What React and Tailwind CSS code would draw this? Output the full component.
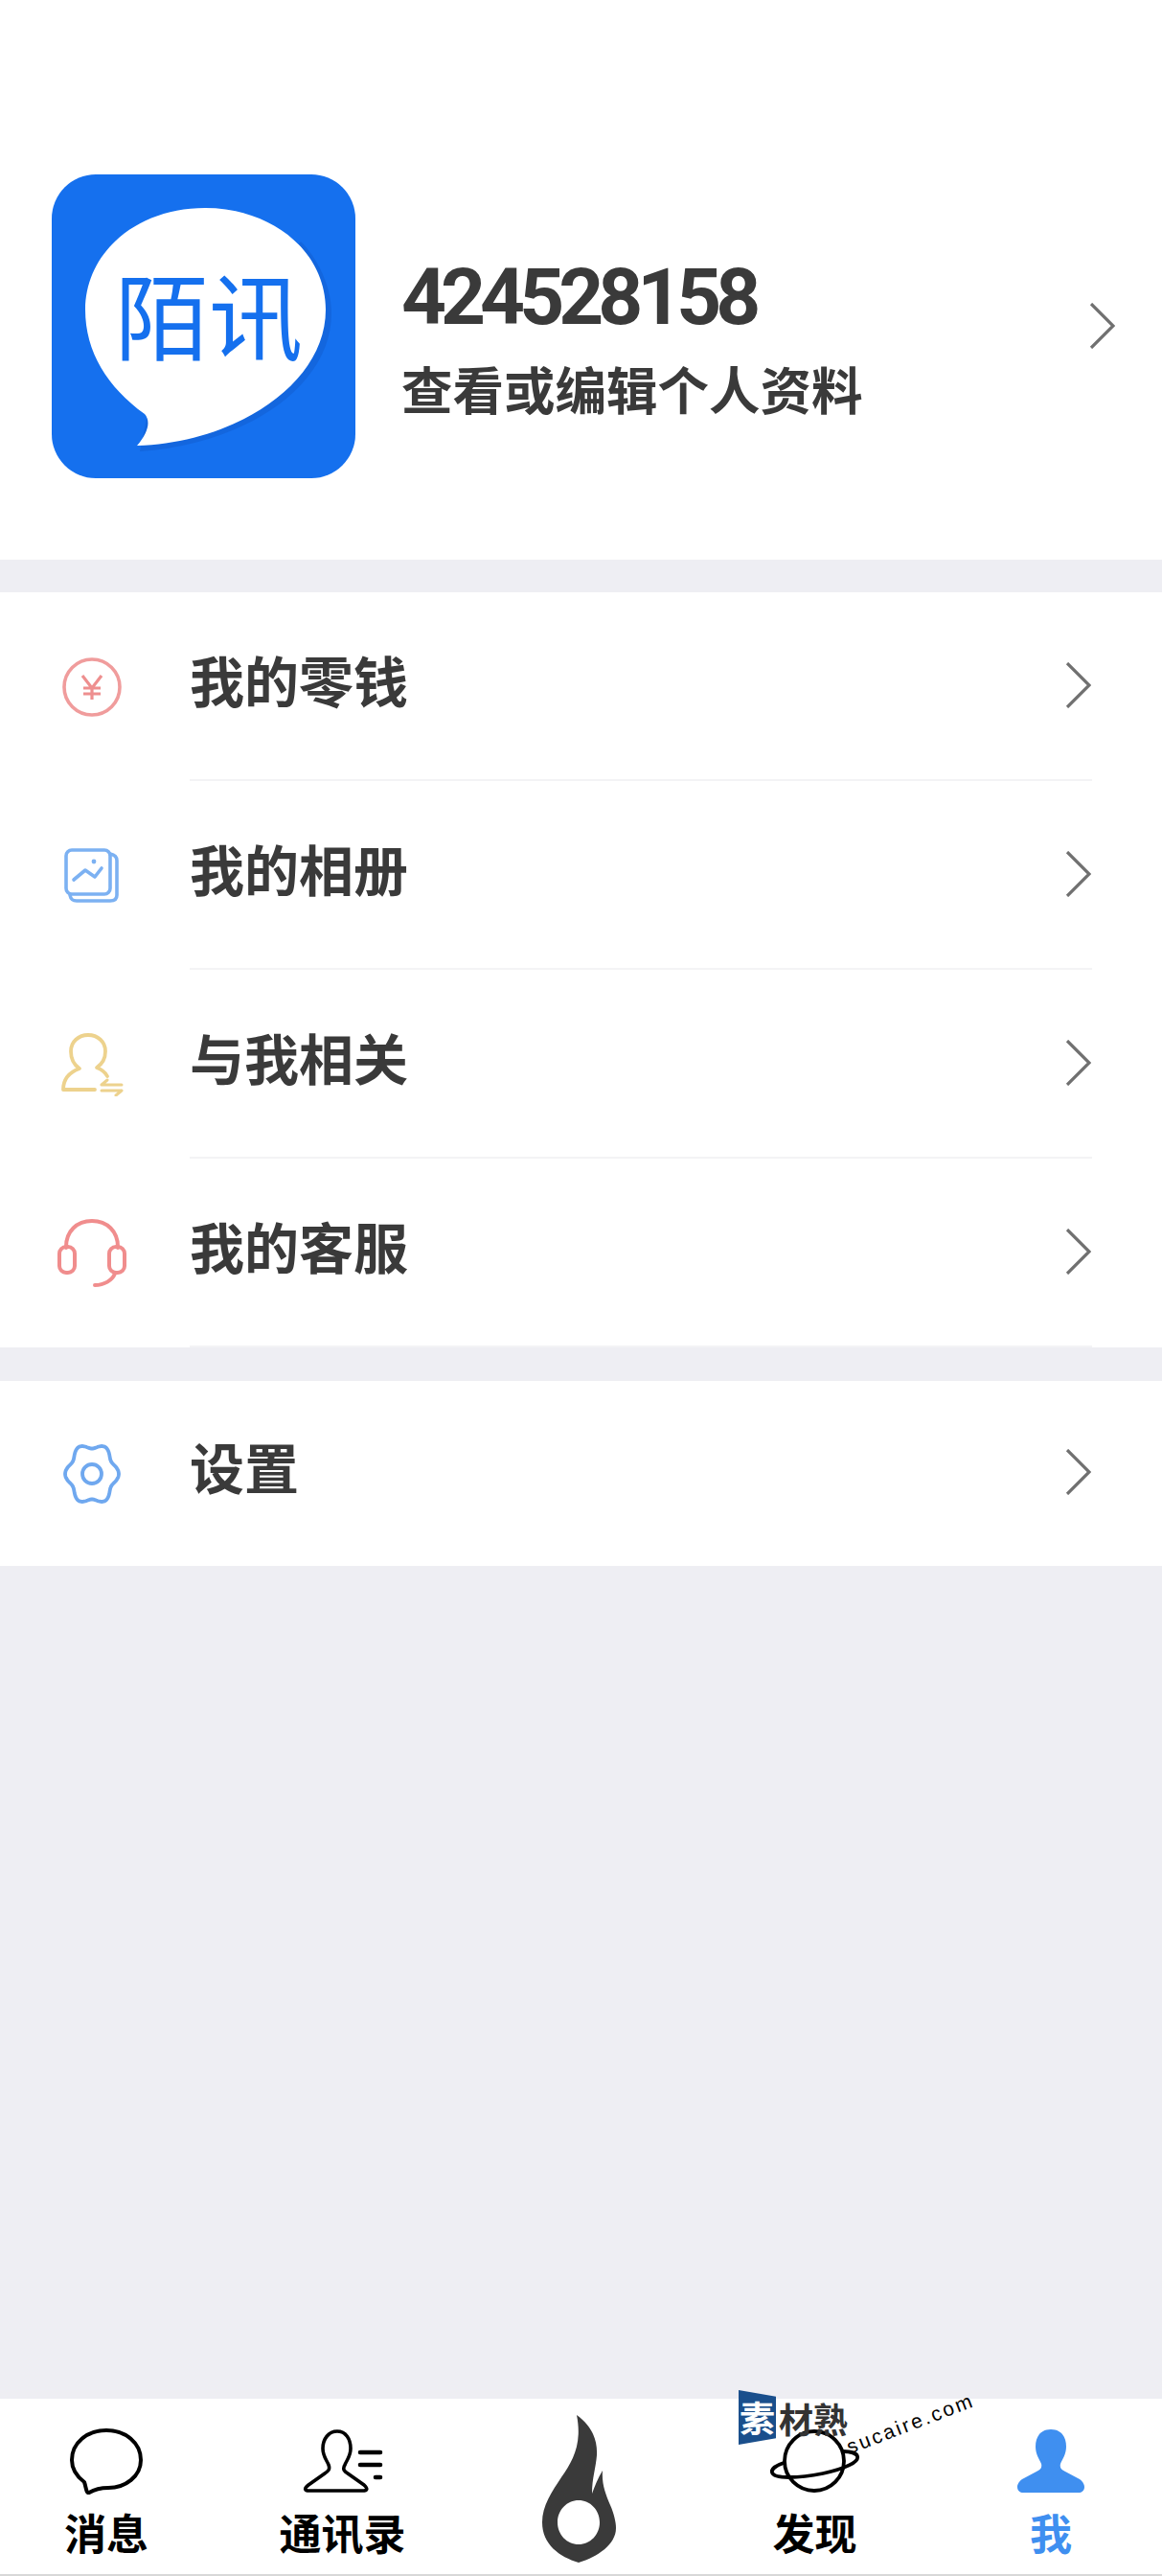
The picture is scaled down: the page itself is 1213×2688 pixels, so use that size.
import React from 'react';

const cjk = { fontFamily: '"Noto Sans CJK SC", "Noto Sans", sans-serif' };

// gear outline: six rounded lobes with a dip at top and bottom, a bit taller than wide
const gearPath = (() => {
  const pts = [];
  for (let i = 0; i < 180; i++) {
    const a = (i / 180) * Math.PI * 2;
    const r = 25.5 - 2.5 * Math.cos(6 * a);
    pts.push(`${(32 + r * Math.sin(a)).toFixed(1)} ${(31 + 1.15 * r * Math.cos(a)).toFixed(1)}`);
  }
  return `M${pts.join('L')}Z`;
})();

const Chevron = () => (
  <svg width="27" height="48" viewBox="0 0 27 48" fill="none" stroke="#707070" strokeWidth="3.2">
    <path d="M2 1 L25 24 L2 47" />
  </svg>
);

const YenIcon = () => (
  <svg width="64" height="64" viewBox="0 0 64 64" fill="none" stroke="#f09c9c" strokeWidth="3.6">
    <circle cx="32" cy="32" r="29" />
    <path d="M22 20 L32 33 L42 20 M32 33 V45 M23 33 H41 M23 39 H41" strokeWidth="3.2" stroke="#ee8f8f" />
  </svg>
);

const AlbumIcon = () => (
  <svg width="58" height="58" viewBox="0 0 58 58" fill="none" stroke="#7cb1f2" strokeWidth="3.6" strokeLinecap="round" strokeLinejoin="round">
    <rect x="2" y="2" width="46" height="46" rx="6" />
    <path d="M48 6 C53 7 55 9 55 13 V49 C55 54 52 55 48 55 H13 C9 55 7 54 6 49" />
    <path d="M10 33 L22 23 L32 30 L39 21" />
    <circle cx="31" cy="14" r="2.4" fill="#7cb1f2" stroke="none" />
  </svg>
);

const PersonSwapIcon = () => (
  <svg width="66" height="66" viewBox="0 0 66 66" fill="none" stroke="#edd28d" strokeWidth="3.8" strokeLinecap="round" strokeLinejoin="round">
    <path d="M36 59 H3 C3 49 9 41 20 37 C14 33 11 27 11 19 C11 9 19 2 29 2 C39 2 47 9 47 19 C47 27 44 32 38 36 C43 38 47 41 49 45" />
    <path d="M43 54 H64 M49 49 L43 54 M43 60 H64 M58 65 L64 60" strokeWidth="3" />
  </svg>
);

const HeadsetIcon = () => (
  <svg width="72" height="72" viewBox="0 0 72 72" fill="none" stroke="#f08d8d" strokeWidth="4" strokeLinecap="round" strokeLinejoin="round">
    <path d="M9 30 V29 C9 13 20 2 36 2 C52 2 63 13 63 29 V30" />
    <rect x="2" y="29" width="16" height="27" rx="7" />
    <rect x="54" y="29" width="16" height="27" rx="7" />
    <path d="M60 57 C57 64 49 69 39 69" />
  </svg>
);

const GearIcon = () => (
  <svg width="64" height="62" viewBox="0 0 64 62" fill="none" stroke="#6fa8ef" strokeWidth="3.8">
    <path d={gearPath} />
    <circle cx="32" cy="31" r="10" />
  </svg>
);

const BubbleIcon = () => (
  <svg width="76" height="69" viewBox="0 0 76 69" fill="none" stroke="#000" strokeWidth="4" strokeLinejoin="round">
    <path d="M15 56 C7 50 2 42 2 33 C2 15 18 2 38 2 C58 2 74 15 74 33 C74 50 58 62 40 62 C32 62 25 64 20 67 C17 68 17 62 15 56 Z" />
  </svg>
);

const ContactsIcon = () => (
  <svg width="84" height="66" viewBox="0 0 84 66" fill="none" stroke="#000" strokeWidth="3.6" strokeLinejoin="round" strokeLinecap="round">
    <path d="M36 2 C27 2 21 10 21 20 C21 28 25 32 27 37 C29 42 26 44 23 46 L6 58 C1 62 2 64 7 64 L62 64 C68 64 68 62 64 58 L47 46 C44 44 41 42 44 37 C46 32 50 28 50 20 C50 10 45 2 36 2 Z" />
    <path d="M60 24 H81 M60 37 H81 M76 50 H81" strokeWidth="4.6" />
  </svg>
);

const FlameIcon = () => (
  <svg width="77" height="154" viewBox="0 0 77 154">
    <path
      fill="#3a3a3a"
      fillRule="evenodd"
      d="M36 0 C50 10 58 24 57 42 C56 55 52 66 52 82 C55 74 58 66 63 58 C62 72 66 82 71 94 C75 103 77 112 77 118 C77 135 58 148 38 154 C18 148 0 135 0 112 C0 95 10 80 20 65 C32 48 42 30 36 0 Z M38 89 C26 89 16 99 16 112 C16 125 26 135 38 135 C50 135 60 125 60 112 C60 99 50 89 38 89 Z"
    />
  </svg>
);

const PlanetIcon = () => (
  <svg width="94" height="66" viewBox="0 0 94 66" fill="none" stroke="#000" strokeWidth="3.8" strokeLinecap="round">
    <circle cx="46" cy="33" r="31" />
    <path d="M14 35 C5 38 1 42 2 45 C4 52 30 51 55 46 C78 41 93 34 91 28 C90 25 84 23 76 23" />
  </svg>
);

const MeIcon = () => (
  <svg width="70" height="66" viewBox="0 0 70 66">
    <path
      fill="#3f8ff0"
      d="M35 0 C24 0 19 8 19 18 C19 26 23 31 25 36 C26 40 24 42 20 44 L5 52 C1 55 0 58 0 60 C0 64 3 66 6 66 L64 66 C67 66 70 64 70 60 C70 58 69 55 65 52 L50 44 C46 42 44 40 45 36 C47 31 51 26 51 18 C51 8 46 0 35 0 Z"
    />
  </svg>
);

const AppLogo = () => (
  <svg width="317" height="317" viewBox="0 0 317 317" className="shrink-0">
    <rect width="317" height="317" rx="46" fill="#1570ee" />
    <path
      d="M92 289 C200 282 292 222 292 145 C292 120 280 90 260 70 L100 250 Z"
      fill="#114fb8"
      opacity="0.3"
    />
    <path
      d="M89 283 C100 270 104 258 97 250 C58 222 35 185 35 141 C35 82 88 35 160 35 C232 35 286 82 286 141 C286 220 190 280 89 283 Z"
      fill="#fff"
    />
    <text x="66" y="186" fontSize="98" fill="#1570ee" style={cjk}>陌讯</text>
  </svg>
);

const MenuRow = ({ icon, label, divider = true, height = 'h-[197px]' }) => (
  <div className={`relative flex items-center ${height}`}>
    <div className="flex w-[198px] shrink-0 justify-center pr-[6px]">{icon}</div>
    <div className="flex h-full flex-1 items-center justify-between pr-[74px]">
      <span className="mb-[16px] text-[57px] leading-none font-bold text-[#3a3a3a]" style={cjk}>{label}</span>
      <div className="mb-[4px]">
        <Chevron />
      </div>
    </div>
    {divider && <div className="absolute right-[73px] bottom-0 left-[198px] h-[2px] bg-[#f3f3f5]" />}
  </div>
);

const NavItem = ({ icon, label, active }) => (
  <div className="flex w-[200px] flex-col items-center pt-[30px]">
    <div className="flex h-[70px] items-center">{icon}</div>
    <span className={`mt-[16px] text-[44px] leading-[46px] font-bold ${active ? 'text-[#3f8ff0]' : 'text-black'}`} style={cjk}>
      {label}
    </span>
  </div>
);

export default function App() {
  return (
    <div className="flex min-h-[2688px] w-full flex-col bg-[#eeeef3]">
      {/* profile header */}
      <div className="flex h-[584px] items-center bg-white pt-[96px] pl-[54px]">
        <AppLogo />
        <div className="ml-[48px] flex flex-1 flex-col pt-[20px]">
          <span className="text-[82px] leading-[92px] font-bold tracking-[-6px] text-[#3a3a3a]" style={{ fontFamily: 'Roboto, sans-serif' }}>
            424528158
          </span>
          <span className="mt-[17px] text-[53.5px] leading-[64px] font-bold text-[#3a3a3a]" style={cjk}>查看或编辑个人资料</span>
        </div>
        <div className="pr-[49px]">
          <Chevron />
        </div>
      </div>

      <div className="mt-[34px] bg-white">
        <MenuRow icon={<YenIcon />} label="我的零钱" />
        <MenuRow icon={<AlbumIcon />} label="我的相册" />
        <MenuRow icon={<PersonSwapIcon />} label="与我相关" />
        <MenuRow icon={<HeadsetIcon />} label="我的客服" />
      </div>

      <div className="mt-[35px] bg-white">
        <MenuRow icon={<GearIcon />} label="设置" divider={false} height="h-[193px]" />
      </div>

      <div className="flex-1" />

      {/* bottom tabs */}
      <div className="relative flex h-[185px] justify-between border-b-2 border-[#d8d8d8] bg-white pr-[16px] pl-[11px]">
        <NavItem icon={<BubbleIcon />} label="消息" />
        <NavItem icon={<ContactsIcon />} label="通讯录" />
        <div className="flex w-[200px] justify-center pt-[17px]">
          <FlameIcon />
        </div>
        <NavItem icon={<PlanetIcon />} label="发现" />
        <NavItem icon={<MeIcon />} label="我" active />

        {/* stock-site watermark stamped over the tab bar */}
        <div className="absolute top-[-9px] left-[771px] flex items-center">
          <div className="flex h-[57px] w-[39px] items-center justify-center bg-[#1a4f8c] [clip-path:polygon(0_0,100%_12%,100%_88%,0_100%)]">
            <span className="text-[37px] leading-none font-bold text-white" style={cjk}>素</span>
          </div>
          <span className="ml-[3px] text-[36px] leading-none font-bold text-[#333]" style={cjk}>材熟</span>
        </div>
        <span
          className="absolute top-[15px] left-[880px] origin-center -rotate-[21deg] text-[21px] leading-none tracking-[2.5px] whitespace-nowrap text-black"
          style={{ fontFamily: '"Liberation Sans", sans-serif' }}
        >
          sucaire.com
        </span>
      </div>
    </div>
  );
}
